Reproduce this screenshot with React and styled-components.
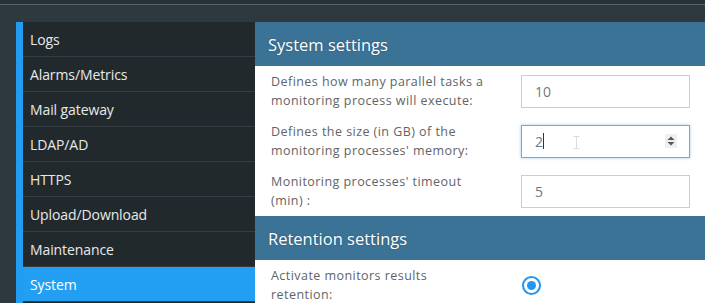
import React from "react";
import styled, { createGlobalStyle } from "styled-components";

const GlobalStyle = createGlobalStyle`
  html, body {
    margin: 0;
    padding: 0;
    background-color: #2e393f;
    font-family: "Open Sans", "DejaVu Sans", sans-serif;
  }
`;

const menuItems = [
  "Logs",
  "Alarms/Metrics",
  "Mail gateway",
  "LDAP/AD",
  "HTTPS",
  "Upload/Download",
  "Maintenance",
  "System",
];

const systemRows = [
  { label: ["Defines how many parallel tasks a", "monitoring process will execute:"], value: "10" },
  { label: ["Defines the size (in GB) of the", "monitoring processes' memory:"], value: "2", focused: true },
  { label: ["Monitoring processes' timeout", "(min) :"], value: "5" },
];

const App = () => {
  return (
    <Page>
      <GlobalStyle />
      <TopBar />
      <Layout>
        <Sidebar>
          {menuItems.map((item) => (
            <MenuItem key={item} active={item === "System"}>
              {item}
            </MenuItem>
          ))}
        </Sidebar>
        <Content>
          <SectionHeader>System settings</SectionHeader>
          {systemRows.map((row) => (
            <Row key={row.value}>
              <Label>
                {row.label[0]}
                <br />
                {row.label[1]}
              </Label>
              <Field focused={row.focused}>
                <Value>{row.value}</Value>
                {row.focused && <Caret />}
                {row.focused && (
                  <MouseCursor width="7" height="13" viewBox="0 0 7 13">
                    <path d="M0.5 0.5h6M3.5 0.5v12M0.5 12.5h6" stroke="#dcdcdc" strokeWidth="1" fill="none" />
                  </MouseCursor>
                )}
                {row.focused && (
                  <Spinner>
                    <svg width="8" height="10" viewBox="0 0 8 10">
                      <path d="M4 0.5L7.5 4H0.5z M4 9.5L0.5 6h7z" fill="#555" />
                    </svg>
                  </Spinner>
                )}
              </Field>
            </Row>
          ))}
          <SectionHeader>Retention settings</SectionHeader>
          <Row>
            <Label>
              Activate monitors results
              <br />
              retention:
            </Label>
            <Radio>
              <RadioDot />
            </Radio>
          </Row>
        </Content>
      </Layout>
    </Page>
  );
};

const Page = styled.div`
  width: 705px;
  height: 303px;
  overflow: hidden;
  background-color: #2e393f;
`;

const TopBar = styled.div`
  height: 4px;
  background-color: #283136;
  border-bottom: 1px solid #58636a;
`;

const Layout = styled.div`
  display: flex;
  padding: 17px 0 0 16px;
`;

const Sidebar = styled.nav`
  width: 232px;
  flex-shrink: 0;
  border-left: 7px solid #229cf0;
  background-color: #22292c;
`;

const MenuItem = styled.div`
  height: 34px;
  display: flex;
  align-items: center;
  padding-left: 7px;
  font-size: 14px;
  letter-spacing: -0.1px;
  color: ${(p) => (p.active ? "#ffffff" : "#e6e9ea")};
  background-color: ${(p) => (p.active ? "#229ff2" : "transparent")};
  border-bottom: 1px solid #343d42;
`;

const Content = styled.main`
  flex: 1;
  background-color: #ffffff;
`;

const SectionHeader = styled.h2`
  margin: 0;
  height: 44px;
  display: flex;
  align-items: center;
  padding-left: 13px;
  font-size: 16.5px;
  font-weight: 400;
  color: #ffffff;
  background-color: #3b7397;
  text-shadow: 0 0 2px rgba(0, 0, 0, 0.3);
`;

const Row = styled.div`
  height: 50px;
  display: flex;
  align-items: center;
  padding: 0 15px 0 16px;
`;

const Label = styled.div`
  width: 250px;
  font-size: 12.5px;
  line-height: 19px;
  letter-spacing: 0.45px;
  color: #5f6467;
`;

const Field = styled.div`
  position: relative;
  box-sizing: border-box;
  width: 169px;
  height: 33px;
  display: flex;
  align-items: center;
  padding: 0 12px 0 13px;
  border: 1px solid ${(p) => (p.focused ? "#62aee9" : "#abd6f6")};
  box-shadow: ${(p) => (p.focused ? "0 0 3px rgba(98, 174, 233, 0.6)" : "none")};
  background-color: #ffffff;
`;

const Value = styled.span`
  font-size: 14px;
  color: #74797c;
`;

const Caret = styled.span`
  width: 1px;
  height: 16px;
  background-color: #333;
`;

const MouseCursor = styled.svg`
  position: absolute;
  left: 51px;
  top: 10px;
`;

const Spinner = styled.span`
  margin-left: auto;
  width: 12px;
  height: 14px;
  display: flex;
  align-items: center;
  justify-content: center;
  background-color: #efefef;
`;

const Radio = styled.span`
  box-sizing: border-box;
  width: 19px;
  height: 19px;
  border-radius: 50%;
  border: 2px solid #2196f3;
  display: flex;
  align-items: center;
  justify-content: center;
  margin-left: 1px;
`;

const RadioDot = styled.span`
  width: 9px;
  height: 9px;
  border-radius: 50%;
  background-color: #2196f3;
`;

export default App;
